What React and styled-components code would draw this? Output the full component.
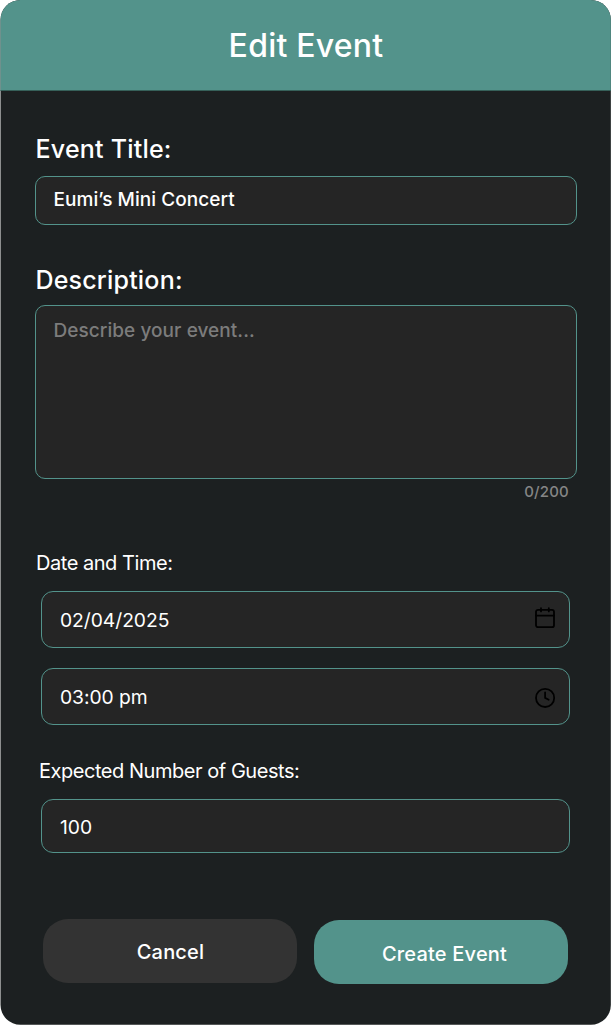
import React from "react";
import styled, { createGlobalStyle } from "styled-components";

const GlobalStyle = createGlobalStyle`
  *, *::before, *::after { box-sizing: border-box; }
  body { margin: 0; background: #ffffff; }
`;

const teal = "#53938b";

const Card = styled.form`
  display: flex;
  flex-direction: column;
  width: 611px;
  height: 1025px;
  margin: 0;
  clip-path: inset(0 0.15px 0.15px 0.5px round 20px);
  background: #1c2021;
  color: #ffffff;
  font-family: Inter, "Liberation Sans", sans-serif;
`;

const Header = styled.header`
  display: flex;
  justify-content: center;
  height: 91px;
  flex: none;
  border-bottom: 1px solid #366059;
  background: ${teal};
`;

const Title = styled.h1`
  margin: 0;
  padding-left: 1px;
  font-size: 32px;
  font-weight: 500;
  line-height: 91px;
  letter-spacing: 0.22px;
`;

const Body = styled.div`
  display: flex;
  flex-direction: column;
  padding: 42px 34px 0 35px;
`;

const Label = styled.label`
  font-size: ${(p) => (p.$small ? 20 : 25)}px;
  font-weight: ${(p) => (p.$small ? 400 : 500)};
  line-height: 32px;
  letter-spacing: ${(p) => (p.$small ? "-0.46px" : "0.2px")};
  margin-top: ${(p) => p.$gapAbove || 0}px;
  margin-left: ${(p) => p.$indent || 0}px;
`;

const Input = styled.input`
  display: block;
  width: 100%;
  height: ${(p) => p.$height}px;
  padding: 1px 18px 0;
  border: 1px solid ${teal};
  border-radius: 12px;
  outline: none;
  background: #252525;
  color: #ffffff;
  font-family: inherit;
  font-size: 19.3px;
  font-weight: 400;
  letter-spacing: -0.05px;
`;

const TitleInput = styled(Input)`
  margin-top: 11px;
  margin-bottom: 39px;
  padding: 0 17.5px 3px;
  border-radius: 10px;
  font-size: 19px;
  font-weight: 500;
  letter-spacing: 0.05px;
`;

const Description = styled.textarea`
  display: block;
  width: 100%;
  height: 174px;
  margin-top: 9px;
  padding: 13px 17.5px;
  border: 1px solid ${teal};
  border-radius: 10px;
  outline: none;
  resize: none;
  background: #252525;
  color: #ffffff;
  font-family: inherit;
  font-size: 19px;
  font-weight: 500;
  line-height: 24px;
  letter-spacing: 0.06px;

  &::placeholder { color: #7c7c7c; opacity: 1; }
`;

const Counter = styled.div`
  margin: 3px 8px 45px 0;
  text-align: right;
  color: #858686;
  font-size: 15px;
  font-weight: 500;
  line-height: 20px;
  letter-spacing: 0.2px;
`;

const FieldGroup = styled.div`
  display: flex;
  flex-direction: column;
  gap: 20px;
  margin: 12px 7px 0 6px;
`;

const IconField = styled.div`
  position: relative;

  svg {
    position: absolute;
    right: 13px;
    top: ${(p) => p.$iconTop}px;
  }
`;

const Actions = styled.div`
  display: flex;
  gap: 17px;
  margin: 66px 9px 0 8px;
`;

const Button = styled.button`
  flex: none;
  width: 254px;
  height: 64px;
  padding: ${(p) => (p.$primary ? "3px 0 0 7px" : "2px 0 0 1px")};
  margin-top: ${(p) => p.$drop || 0}px;
  border: 0;
  border-radius: 25px;
  background: ${(p) => (p.$primary ? teal : "#333333")};
  color: #ffffff;
  font-family: inherit;
  font-size: 20px;
  font-weight: 500;
  letter-spacing: 0.2px;
`;

const CalendarIcon = () => (
  <svg width="24" height="24" viewBox="0 0 24 24" fill="none" stroke="#000" strokeWidth="1.8" strokeLinecap="round" strokeLinejoin="round">
    <rect x="3" y="4.8" width="18" height="17.4" rx="2" />
    <path d="M8 3.2v3.2M15.8 3.2v3.2M3 10.6h18" />
  </svg>
);

const ClockIcon = () => (
  <svg width="24" height="24" viewBox="0 0 24 24" fill="none" stroke="#000" strokeWidth="1.8" strokeLinecap="round" strokeLinejoin="round">
    <circle cx="12.1" cy="11.9" r="9.1" />
    <path d="M12.1 6.5v5.4l3.6 1.8" />
  </svg>
);

export default function App() {
  return (
    <>
      <GlobalStyle />
      <Card>
        <Header>
          <Title>Edit Event</Title>
        </Header>
        <Body>
          <Label htmlFor="title" $indent={0.6}>Event Title:</Label>
          <TitleInput id="title" defaultValue="Eumi’s Mini Concert" $height={49} />

          <Label htmlFor="description" $indent={0.4}>Description:</Label>
          <Description id="description" placeholder="Describe your event..." />
          <Counter>0/200</Counter>

          <Label htmlFor="date" $small $indent={1}>Date and Time:</Label>
          <FieldGroup>
            <IconField $iconTop={14}>
              <Input id="date" defaultValue="02/04/2025" $height={57} />
              <CalendarIcon />
            </IconField>
            <IconField $iconTop={18}>
              <Input aria-label="Time" defaultValue="03:00 pm" $height={57} />
              <ClockIcon />
            </IconField>
          </FieldGroup>

          <Label htmlFor="guests" $small $indent={4} $gapAbove={30}>Expected Number of Guests:</Label>
          <FieldGroup>
            <Input id="guests" defaultValue="100" $height={54} />
          </FieldGroup>

          <Actions>
            <Button type="button">Cancel</Button>
            <Button type="button" $primary $drop={1}>Create Event</Button>
          </Actions>
        </Body>
      </Card>
    </>
  );
}
